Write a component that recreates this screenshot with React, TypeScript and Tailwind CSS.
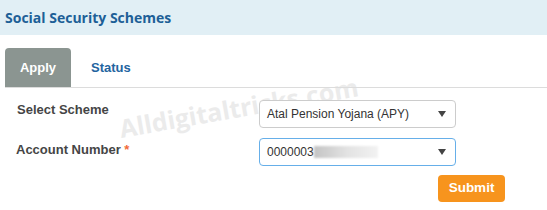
import React from 'react';

const Caret = () => (
    <svg width="8" height="6" viewBox="0 0 8 6" className="text-[#444]" fill="currentColor">
        <path d="M0 0h8L4 6z" />
    </svg>
);

const App: React.FC = () => {
    return (
        <div className="relative w-[547px] h-[210px] bg-white overflow-hidden [font-family:'Liberation_Sans',Arial,sans-serif]">
            {/* watermark sits behind the form controls */}
            <div className="absolute left-[121px] top-[116px] z-0 leading-none -rotate-[10deg] origin-[0%_80%] text-[25px] font-bold text-[#ebebeb] [font-family:'Open_Sans',sans-serif] pointer-events-none select-none">
                Alldigitaltricks.com
            </div>

            <div className="relative h-[35px] bg-[#e1eff5] flex items-center pl-[5px]">
                <h2 className="text-[14px] font-bold text-[#1d5f97] [font-family:'Open_Sans',sans-serif]">Social Security Schemes</h2>
            </div>

            <div className="relative mt-[13px] ml-[5px] flex items-end border-b border-[#dcdcdc] h-[40px]">
                <div className="w-[66px] h-[39px] bg-[#8b9591] rounded-t-[4px] flex items-center justify-center text-white font-bold text-[13px]">Apply</div>
                <div className="ml-[20px] h-[39px] flex items-center text-[#23649f] font-bold text-[13px]">Status</div>
            </div>

            <div className="relative mt-[12px] flex items-center">
                <label className="w-[259px] pl-[17px] -mt-[8px] text-[13px] font-bold text-[#454545]">Select Scheme</label>
                <div className="w-[197px] h-[28px] bg-white border border-[#cccccc] rounded-[4px] flex items-center justify-between pl-[7px] pr-[9px] text-[12px] text-[#333]">
                    <span>Atal Pension Yojana (APY)</span>
                    <Caret />
                </div>
            </div>

            <div className="relative mt-[10px] flex items-center">
                <label className="w-[259px] pl-[16px] -mt-[4px] text-[13px] font-bold text-[#454545]">
                    Account Number <span className="text-[#f26b3a]">*</span>
                </label>
                <div className="w-[197px] h-[28px] bg-white border border-[#66afe9] rounded-[4px] flex items-center justify-between pl-[7px] pr-[9px] text-[12px] text-[#333]">
                    <span className="flex items-center">
                        0000003
                        <span className="inline-block w-[64px] h-[12px] bg-gradient-to-r from-[#c4c4c4] via-[#e2e2e2] to-[#f2f2f2] blur-[1px]" />
                    </span>
                    <Caret />
                </div>
            </div>

            <div className="relative mt-[9px] flex pl-[438px]">
                <button className="w-[67px] h-[27px] bg-[#f7941d] rounded-[4px] text-white font-bold text-[13.5px]">Submit</button>
            </div>
        </div>
    );
};

export default App;
